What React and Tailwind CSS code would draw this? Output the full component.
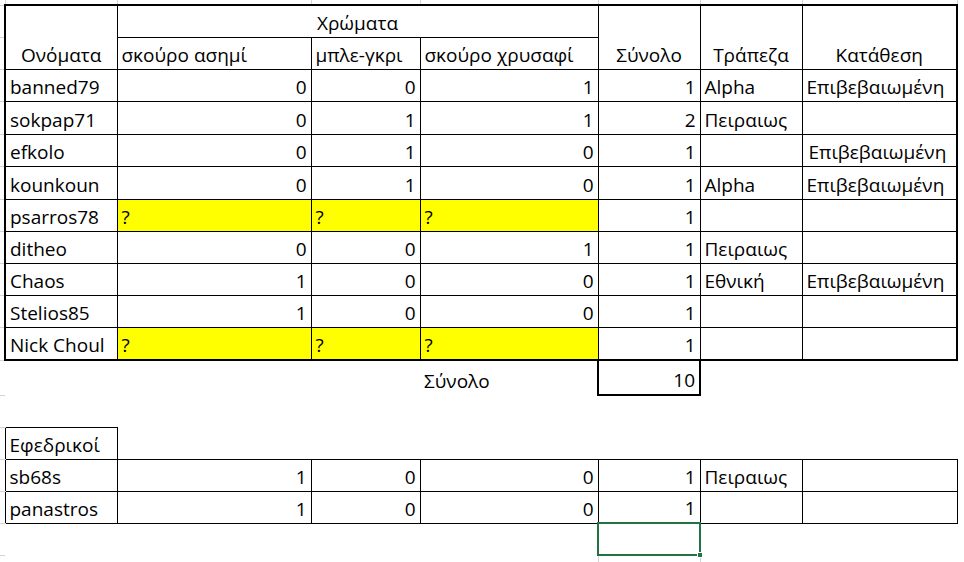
import React from 'react';

const grid = 'border-[#d4d4d4]';

const players = [
  ['banned79', '0', '0', '1', '1', 'Alpha', 'Επιβεβαιωμένη', 32],
  ['sokpap71', '0', '1', '1', '2', 'Πειραιως', '', 33],
  ['efkolo', '0', '1', '0', '1', '', 'Επιβεβαιωμένη', 32],
  ['kounkoun', '0', '1', '0', '1', 'Alpha', 'Επιβεβαιωμένη', 33],
  ['psarros78', '?', '?', '?', '1', '', '', 32],
  ['ditheo', '0', '0', '1', '1', 'Πειραιως', '', 32],
  ['Chaos', '1', '0', '0', '1', 'Εθνική', 'Επιβεβαιωμένη', 32],
  ['Stelios85', '1', '0', '0', '1', '', '', 32],
  ['Nick Choul', '?', '?', '?', '1', '', '', 33],
];

const reserves = [
  ['sb68s', '1', '0', '0', '1', 'Πειραιως', '', 32],
  ['panastros', '1', '0', '0', '1', '', '', 32],
];

const cell = 'border border-black px-[4px] pb-[1px] align-bottom whitespace-nowrap leading-[26px]';

const Margin = () => <td className={`border-y ${grid}`}></td>;

const PlayerRow = ({ r, last, thick }) => {
  const unknown = r[1] === '?';
  const bottom = last ? 'border-b-2' : '';
  return (
    <tr className={r[7] === 33 ? 'h-[33px]' : 'h-[32px]'}>
      <Margin />
      <td className={`${cell} ${bottom} ${thick ? 'border-l-2' : ''}`}>{r[0]}</td>
      {[1, 2, 3].map(i => (
        <td key={i} className={`${cell} ${bottom} ${unknown ? 'bg-[#ffff00] text-left' : 'text-right'}`}>{r[i]}</td>
      ))}
      <td className={`${cell} ${bottom} text-right`}>{r[4]}</td>
      <td className={`${cell} ${bottom}`}>{r[5]}</td>
      <td className={`${cell} ${bottom} ${thick ? 'border-r-2' : ''} ${r[0] === 'efkolo' ? 'pl-[6px]' : ''}`}>{r[6]}</td>
    </tr>
  );
};

const widths = ['w-[112px]', 'w-[194px]', 'w-[109px]', 'w-[178px]', 'w-[102px]', 'w-[102px]', 'w-[155px]'];

export default function App() {
  return (
    <div className="w-[964px] h-[562px] bg-white overflow-hidden text-black text-[19px]" style={{ fontFamily: '"Open Sans", "Noto Sans", sans-serif' }}>
      <table className="table-fixed border-collapse w-[957px]">
        <colgroup>
          <col className="w-[5px]" />
          {widths.map(w => <col key={w} className={w} />)}
        </colgroup>
        <tbody>
          <tr className="h-[5px]">
            <td></td>
            {widths.map((w, i) => <td key={i} className={`border-x ${grid}`}></td>)}
          </tr>

          {/* header */}
          <tr className="h-[32px]">
            <Margin />
            <td rowSpan={2} className={`${cell} border-l-2 border-t-2 text-center`}>Ονόματα</td>
            <td colSpan={3} className={`${cell} border-t-2 text-center`}>Χρώματα</td>
            <td rowSpan={2} className={`${cell} border-t-2 text-center`}>Σύνολο</td>
            <td rowSpan={2} className={`${cell} border-t-2 text-center`}>Τράπεζα</td>
            <td rowSpan={2} className={`${cell} border-t-2 border-r-2 text-center`}>Κατάθεση</td>
          </tr>
          <tr className="h-[32px]">
            <Margin />
            <td className={cell}>σκούρο ασημί</td>
            <td className={cell}>μπλε-γκρι</td>
            <td className={cell}>σκούρο χρυσαφί</td>
          </tr>

          {players.map((r, i) => (
            <PlayerRow key={r[0]} r={r} thick last={i === players.length - 1} />
          ))}

          {/* total */}
          <tr className="h-[35px]">
            <Margin />
            <td></td>
            <td></td>
            <td></td>
            <td className="px-[4px] pb-[1px] align-bottom leading-[26px]">Σύνολο</td>
            <td className={`${cell} border-2 text-right`}>10</td>
            <td></td>
            <td></td>
          </tr>

          <tr className="h-[32px]">
            <Margin />
            <td colSpan={7}></td>
          </tr>

          {/* reserves */}
          <tr className="h-[32px]">
            <Margin />
            <td className={cell}>Εφεδρικοί</td>
            <td colSpan={6}></td>
          </tr>
          {reserves.map(r => (
            <PlayerRow key={r[0]} r={r} />
          ))}

          <tr className="h-[32px]">
            <Margin />
            <td colSpan={4}></td>
            <td className="relative border-2 border-[#217346]">
              <span className="absolute -right-[4px] -bottom-[4px] w-[6px] h-[6px] bg-[#217346] border border-white"></span>
            </td>
            <td colSpan={2}></td>
          </tr>
          <tr className="h-[7px]">
            <td colSpan={5}></td>
            <td className={`border-x ${grid}`}></td>
            <td colSpan={2}></td>
          </tr>
        </tbody>
      </table>
    </div>
  );
}
